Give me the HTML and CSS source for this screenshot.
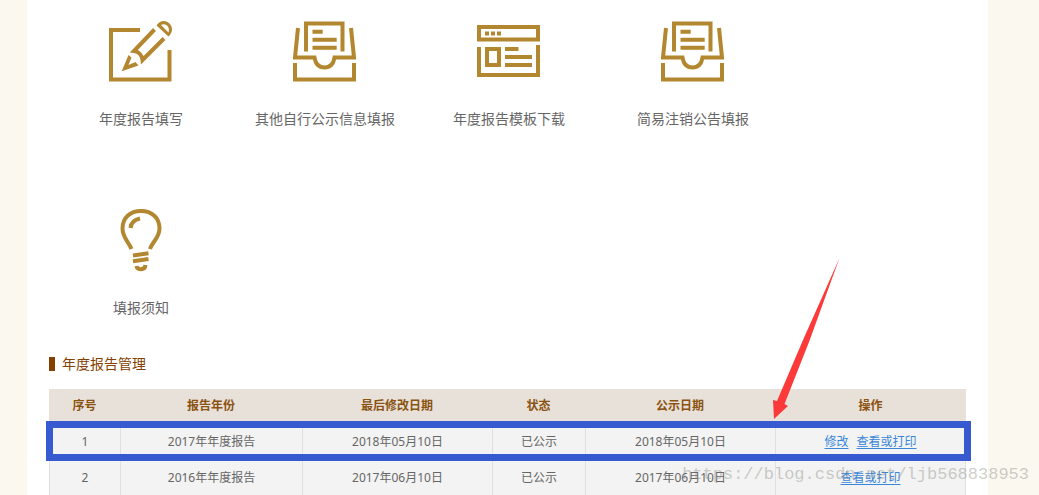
FILE: index.html
```
<!DOCTYPE html>
<html lang="zh-CN">
<head>
<meta charset="utf-8">
<title>年度报告管理</title>
<link rel="stylesheet" href="styles.css">
</head>
<body>
<svg class="symbols" aria-hidden="true">
  <symbol id="inbox" viewBox="0 0 64 64">
    <path d="M5 8L2 37.500H21.500C22.500 44 26 47.500 31.500 47.500S40.500 44 41.500 37.500H61L58 8"/>
    <path d="M13 31.500V3.500H49.500V31.500M19.500 11.700H29.700M19.500 19.700H43.700M19.500 27.700H43.700M2 43V59.500H61V43"/>
  </symbol>
</svg>
<main class="page">
  <nav class="tiles">
    <a class="tile" href="#report">
      <svg class="icon" viewBox="0 0 64 64" aria-hidden="true">
        <path d="M31 10H2V59.500H60.500V30"/>
        <path d="M45.500 9.500L25 31C29.500 31.500 33 35 33.500 40L55 18.500"/>
        <path class="solid" fill-rule="evenodd" d="M47.500 5.500C51 0 57 0 60.500 3.500S64 12.500 59.500 16.500ZM52 5L59.500 12.500C61.500 7.500 57 2.500 52 5Z"/>
        <path class="solid" d="M19.500 35L22.500 37.500L19.500 45L26.500 42L29.500 45.500L12.700 51.200Z"/>
      </svg>
      <span>年度报告填写</span>
    </a>
    <a class="tile" href="#info">
      <svg class="icon" viewBox="0 0 64 64" aria-hidden="true"><use href="#inbox"/></svg>
      <span>其他自行公示信息填报</span>
    </a>
    <a class="tile" href="#template">
      <svg class="icon" viewBox="0 0 64 64" aria-hidden="true">
        <path d="M2 7H61V19.500H2ZM2 27V55H61V25M10 29H22V45H10ZM28 29H41.500M28 37H55M28 45H55"/>
        <path class="solid" d="M8 11.500h4v4h-4zM14 11.500h4v4h-4zM20 11.500h4v4h-4z"/>
      </svg>
      <span>年度报告模板下载</span>
    </a>
    <a class="tile" href="#cancel">
      <svg class="icon" viewBox="0 0 64 64" aria-hidden="true"><use href="#inbox"/></svg>
      <span>简易注销公告填报</span>
    </a>
    <a class="tile" href="#notice">
      <svg class="icon" viewBox="0 0 64 64" aria-hidden="true">
        <path d="M22.500 40C20 33 13.500 29 13.500 19.500C13.500 9 21 2 32 2S50.500 9 50.500 19.500C50.500 29 43 33 41 40"/>
        <path d="M21.500 19C22 13.500 26 10.500 31 9.500M24 46.500L39.500 44.300M24 52.200L39.500 50M27.500 57C28 61.500 36 61.500 36.500 56"/>
      </svg>
      <span>填报须知</span>
    </a>
  </nav>

  <h2 class="heading">年度报告管理</h2>

  <div class="report">
    <table class="grid">
      <colgroup>
        <col class="col-no"><col class="col-year"><col class="col-date"><col class="col-state"><col class="col-date"><col class="col-ops">
      </colgroup>
      <thead>
        <tr><th>序号</th><th>报告年份</th><th>最后修改日期</th><th>状态</th><th>公示日期</th><th>操作</th></tr>
      </thead>
      <tbody>
        <tr><td>1</td><td>2017年年度报告</td><td>2018年05月10日</td><td>已公示</td><td>2018年05月10日</td><td><span class="ops"><a href="#edit">修改</a><a href="#view-2017">查看或打印</a></span></td></tr>
        <tr><td>2</td><td>2016年年度报告</td><td>2017年06月10日</td><td>已公示</td><td>2017年06月10日</td><td><span class="ops"><a href="#view-2016">查看或打印</a></span></td></tr>
      </tbody>
    </table>
    <div class="row-marker"></div>
    <svg class="arrow" viewBox="0 0 72 164" aria-hidden="true">
      <path d="M70.500 2L40 86L15.500 148L19 150L5 163L4 144L8 145L34 84Z"/>
    </svg>
  </div>
</main>
<div class="watermark">https://blog.csdn.net/ljb568838953</div>
</body>
</html>
```
FILE: styles.css
```
* { box-sizing: border-box; }

body {
  margin: 0;
  position: relative;
  min-height: 100vh;
  background: #fbf8f0;
  color: #666;
  font: 12px/20px "Noto Sans", "Noto Sans CJK SC", sans-serif;
}

.symbols { position: absolute; width: 0; height: 0; }

.page {
  min-height: 100vh;
  margin: 0 51px 0 27px;
  padding: 20px 22px 0;
  background: #fff;
}

.tiles {
  display: grid;
  grid-template-columns: repeat(auto-fill, 184px);
  row-gap: 80px;
  max-width: 800px;
}

.tile {
  display: flex;
  flex-direction: column;
  align-items: center;
  gap: 25px;
  color: #666;
  font-size: 14px;
  text-decoration: none;
}

.icon { width: 64px; height: 64px; }

.icon, .symbols {
  fill: none;
  stroke: #b3872f;
  stroke-width: 4;
}

.solid { fill: #b3872f; stroke: none; }

.heading {
  display: flex;
  align-items: center;
  gap: 7px;
  margin: 36px 0 15px;
  color: #854000;
  font-size: 14px;
  font-weight: 400;
}

.heading::before {
  content: "";
  width: 6px;
  height: 14px;
  background: #854000;
}

.report { position: relative; }

.grid {
  width: 100%;
  table-layout: fixed;
  border-collapse: separate;
  border-spacing: 0;
  text-align: center;
}

.col-no { width: 71px; }
.col-year { width: 182px; }
.col-date { width: 190px; }
.col-state { width: 93px; }

th {
  height: 34px;
  padding: 0;
  background: #e8e1da;
  color: #8a5310;
}

td {
  height: 36px;
  padding: 2px 0 0;
  background: #f3f3f3;
  border-left: 1px solid #e0e0e0;
}

td:last-child { border-right: 1px solid #e0e0e0; }

.ops {
  display: flex;
  justify-content: center;
  gap: 8px;
}

.ops a {
  color: #3a87d9;
  text-underline-offset: 2px;
}

.row-marker {
  position: absolute;
  top: 32px;
  left: -3px;
  right: -5px;
  height: 40px;
  border: 7px solid #385ad1;
}

.arrow {
  position: absolute;
  right: 125px;
  bottom: 75px;
  width: 72px;
  height: 164px;
  fill: #fc3a3a;
}

.watermark {
  position: absolute;
  right: 10px;
  bottom: 8px;
  color: rgba(130, 130, 120, 0.4);
  font: 17px/24px "Liberation Mono", monospace;
}
```
